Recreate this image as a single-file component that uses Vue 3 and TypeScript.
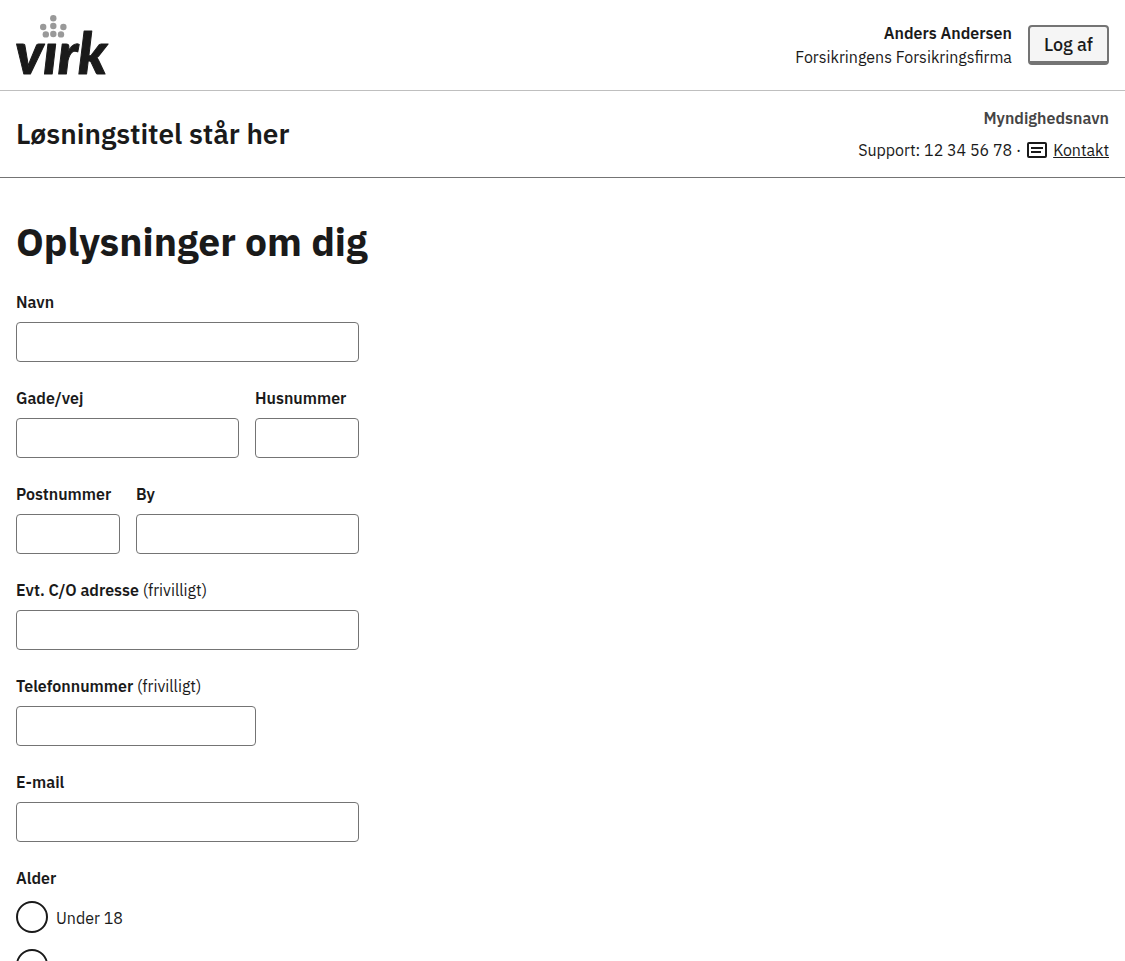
<script setup lang="ts">
import { ref } from 'vue'

interface Field {
  id: string
  label: string
  type: 'text' | 'tel' | 'email'
  optional?: boolean
}

interface Row {
  layout: 'full' | 'wide-narrow' | 'narrow-wide' | 'medium'
  fields: Field[]
}

interface AgeOption {
  value: string
  name: string
  text?: string
}

const rows: Row[] = [
  { layout: 'full', fields: [{ id: 'navn', label: 'Navn', type: 'text' }] },
  {
    layout: 'wide-narrow',
    fields: [
      { id: 'gade', label: 'Gade/vej', type: 'text' },
      { id: 'husnummer', label: 'Husnummer', type: 'text' },
    ],
  },
  {
    layout: 'narrow-wide',
    fields: [
      { id: 'postnummer', label: 'Postnummer', type: 'text' },
      { id: 'by', label: 'By', type: 'text' },
    ],
  },
  { layout: 'full', fields: [{ id: 'co', label: 'Evt. C/O adresse', type: 'text', optional: true }] },
  { layout: 'medium', fields: [{ id: 'telefon', label: 'Telefonnummer', type: 'tel', optional: true }] },
  { layout: 'full', fields: [{ id: 'email', label: 'E-mail', type: 'email' }] },
]

const ages: AgeOption[] = [
  { value: 'under', name: 'Under 18', text: 'Under 18' },
  { value: 'over', name: 'Over 18' },
]

const values = ref<Record<string, string>>({})
const age = ref<string>('')
</script>

<template>
  <div class="page">
    <header>
      <div class="portal">
        <a class="logo" href="#" aria-label="virk">
          <svg width="96" height="64" viewBox="0 0 96 64" aria-hidden="true">
            <g fill="#999999">
              <circle cx="37.3" cy="5.2" r="3.2" />
              <circle cx="27.2" cy="14" r="3.2" />
              <circle cx="37.3" cy="13" r="3.2" />
              <circle cx="47.4" cy="14" r="3.2" />
              <circle cx="29.8" cy="21.4" r="3.2" />
              <circle cx="37.3" cy="21" r="3.2" />
              <circle cx="45" cy="21.4" r="3.2" />
            </g>
            <text class="wordmark" x="-1" y="61">vırk</text>
          </svg>
        </a>
        <div class="user">
          <div class="identity">
            <strong>Anders Andersen</strong>
            <span>Forsikringens Forsikringsfirma</span>
          </div>
          <button class="logout" type="button">Log af</button>
        </div>
      </div>
      <div class="solution">
        <div class="solution-title">Løsningstitel står her</div>
        <div class="authority">
          <strong class="authority-name">Myndighedsnavn</strong>
          <div class="support">
            <span>Support: 12 34 56 78 ·</span>
            <svg width="20" height="16" viewBox="0 0 20 16" aria-hidden="true">
              <rect x="1" y="1" width="18" height="14" rx="1" fill="none" stroke="#1a1a1a" stroke-width="2" />
              <path d="M4 6h12M4 10h10" stroke="#1a1a1a" stroke-width="2" />
            </svg>
            <a href="#">Kontakt</a>
          </div>
        </div>
      </div>
    </header>

    <main>
      <h1>Oplysninger om dig</h1>
      <form @submit.prevent>
        <div v-for="(row, i) in rows" :key="i" class="row" :class="row.layout">
          <div v-for="field in row.fields" :key="field.id" class="field">
            <label :for="field.id">
              {{ field.label }}
              <span v-if="field.optional" class="optional">(frivilligt)</span>
            </label>
            <input :id="field.id" v-model="values[field.id]" :type="field.type" />
          </div>
        </div>
        <fieldset>
          <legend>Alder</legend>
          <div class="options">
            <div v-for="option in ages" :key="option.value" class="option">
              <input
                :id="`alder-${option.value}`"
                v-model="age"
                type="radio"
                name="alder"
                :value="option.value"
                :aria-label="option.name"
              />
              <label v-if="option.text" :for="`alder-${option.value}`">{{ option.text }}</label>
            </div>
          </div>
        </fieldset>
      </form>
    </main>
  </div>
</template>

<style>
body {
  margin: 0;
  background: #ffffff;
}
</style>

<style scoped>
.page {
  color: #1a1a1a;
  font-family: "IBM Plex Sans", "Open Sans", "Noto Sans", sans-serif;
  font-size: 16px;
  line-height: 24px;
}

.portal,
.solution {
  display: flex;
  align-items: center;
  justify-content: space-between;
  box-sizing: border-box;
  padding: 0 16px;
}

.portal {
  min-height: 91px;
  border-bottom: 1px solid #bfbfbf;
}

.logo,
.logo svg {
  display: block;
}

.logo svg {
  overflow: visible;
}

.wordmark {
  fill: #1a1a1a;
  stroke: #1a1a1a;
  stroke-width: 1px;
  stroke-linejoin: round;
  font-family: Lato, sans-serif;
  font-size: 57px;
  font-style: italic;
  font-weight: 900;
}

.user {
  display: flex;
  align-items: center;
  gap: 16px;
}

.identity {
  display: flex;
  flex-direction: column;
  align-items: flex-end;
}

strong {
  font-weight: 600;
}

.logout {
  height: 40px;
  padding: 2px 14px 0;
  border: 2px solid #747474;
  border-bottom-width: 4px;
  border-radius: 4px;
  background: #f5f5f5;
  color: inherit;
  font: inherit;
  font-size: 18px;
  font-weight: 500;
}

.solution {
  min-height: 87px;
  border-bottom: 1px solid #747474;
}

.solution-title {
  font-size: 28px;
  font-weight: 600;
  line-height: 36px;
}

.authority {
  display: flex;
  flex-direction: column;
  align-items: flex-end;
  gap: 8px;
}

.authority-name {
  color: #454545;
}

.support {
  display: flex;
  align-items: center;
  gap: 6px;
}

.support a {
  color: inherit;
}

main {
  padding: 40px 16px 0;
}

h1 {
  margin: 0 0 24px;
  font-size: 39px;
  font-weight: 700;
  line-height: 48px;
}

form {
  display: grid;
  gap: 24px;
  max-width: 343px;
}

.row {
  display: grid;
  gap: 16px;
}

.wide-narrow {
  grid-template-columns: 1fr 104px;
}

.narrow-wide {
  grid-template-columns: 104px 1fr;
}

.medium {
  max-width: 240px;
}

.field {
  display: grid;
  gap: 8px;
  min-width: 0;
}

.field label,
legend {
  font-weight: 600;
  white-space: nowrap;
}

.field label .optional {
  font-weight: 400;
}

.field input {
  box-sizing: border-box;
  width: 100%;
  height: 40px;
  padding: 0 8px;
  border: 1px solid #747474;
  border-radius: 4px;
  background: #ffffff;
  color: inherit;
  font: inherit;
}

fieldset {
  min-width: 0;
  margin: 0;
  padding: 0;
  border: 0;
}

legend {
  padding: 0;
}

.options {
  display: grid;
  gap: 16px;
  padding-top: 11px;
}

.option {
  display: flex;
  align-items: center;
  gap: 8px;
}

.option label {
  padding-top: 2px;
}

.option input {
  appearance: none;
  box-sizing: border-box;
  width: 32px;
  height: 32px;
  margin: 0;
  border: 2px solid #1a1a1a;
  border-radius: 50%;
  background: #ffffff;
}

.option input:checked {
  box-shadow: inset 0 0 0 6px #ffffff;
  background: #1a1a1a;
}
</style>
